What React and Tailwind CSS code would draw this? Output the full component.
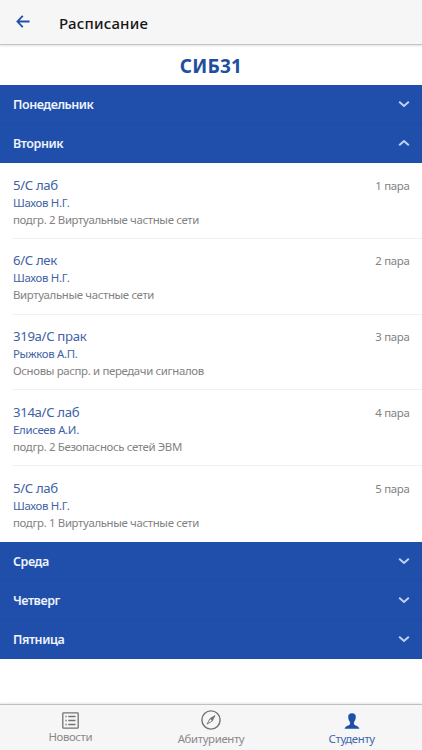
const lessons = [
  { room: "5/С лаб", teacher: "Шахов Н.Г.", subject: "подгр. 2 Виртуальные частные сети", pair: "1 пара" },
  { room: "6/С лек", teacher: "Шахов Н.Г.", subject: "Виртуальные частные сети", pair: "2 пара" },
  { room: "319а/С прак", teacher: "Рыжков А.П.", subject: "Основы распр. и передачи сигналов", pair: "3 пара" },
  { room: "314а/С лаб", teacher: "Елисеев А.И.", subject: "подгр. 2 Безопаснось сетей ЭВМ", pair: "4 пара" },
  { room: "5/С лаб", teacher: "Шахов Н.Г.", subject: "подгр. 1 Виртуальные частные сети", pair: "5 пара" },
];

const days = [
  { name: "Понедельник" },
  { name: "Вторник", open: true, lessons },
  { name: "Среда" },
  { name: "Четверг" },
  { name: "Пятница" },
];

function Chevron({ up }) {
  return (
    <svg
      className={up ? "mb-px rotate-180" : "mb-px"}
      width="12"
      height="8"
      viewBox="0 0 12 8"
      fill="none"
      stroke="#c3d1ec"
      strokeWidth="2"
    >
      <path d="M1.2 1.7 6 6 10.8 1.7" />
    </svg>
  );
}

function NewsIcon() {
  return (
    <svg width="17" height="17" viewBox="0 0 17 17" fill="none" stroke="#737373" strokeWidth="1.3">
      <rect x="0.8" y="0.8" width="15.4" height="15.4" rx="0.8" />
      <path d="M6.3 4.5H13.5M6.3 8.5H13.5M6.3 12.5H13.5M3.4 4.5H4.7M3.4 8.5H4.7M3.4 12.5H4.7" />
    </svg>
  );
}

function CompassIcon() {
  return (
    <svg width="20" height="20" viewBox="0 0 20 20" fill="none" stroke="#737373" strokeWidth="1.4">
      <circle cx="10" cy="10" r="9.1" />
      <path d="M14 5.6 8.9 8.7 6.1 14.1 11.2 11Z" strokeWidth="0.9" />
      <path d="M14 5.6 8.9 8.7 11.2 11Z" fill="#737373" stroke="none" />
    </svg>
  );
}

function StudentIcon() {
  return (
    <svg width="16" height="16" viewBox="0 0 16 16" fill="#1f4fa9">
      <path d="M8 0.2C5.5 0.2 4 1.7 4.2 4.1C4.3 6.2 4.9 7.9 6 9V11C5.9 12.7 1.2 12.6 0.6 15.8H15.4C14.8 12.6 10.1 12.7 10 11V9C11.1 7.9 11.7 6.2 11.8 4.1C12 1.7 10.5 0.2 8 0.2Z" />
    </svg>
  );
}

function Lesson({ item, last }) {
  return (
    <li className="pl-[13px]">
      <div
        className={
          last
            ? "flex h-[76px] justify-between pt-[12.5px] pr-[12.5px]"
            : "flex h-[75.75px] justify-between border-b border-[#f0f0f0] pt-[12.5px] pr-[12.5px]"
        }
      >
        <div className="whitespace-nowrap">
          <div className="text-[13.2px] leading-[18px] tracking-[-0.34px] text-[#4163a5]">{item.room}</div>
          <div className="text-[11.4px] leading-[17px] tracking-[-0.3px] text-[#4163a5]">{item.teacher}</div>
          <div className="text-[11.4px] leading-[17px] tracking-[-0.34px] text-[#828282]">{item.subject}</div>
        </div>
        <div className="text-[11.4px] leading-[19px] tracking-[-0.3px] text-[#828282]">{item.pair}</div>
      </div>
    </li>
  );
}

export default function App() {
  return (
    <div className="flex h-[750px] w-[422px] flex-col overflow-hidden bg-white font-['Noto_Sans','Open_Sans',sans-serif]">
      {/* Header */}
      <header className="flex h-[45px] shrink-0 items-center border-b border-[#c4c4c4] bg-[#f6f6f6] pl-[16px] shadow-[0_1px_2px_rgba(0,0,0,0.12)]">
        <svg width="14" height="13" viewBox="0 0 14 13" fill="none" stroke="#1f4fa9" strokeWidth="1.8" className="mb-px">
          <path d="M6.8 0.8 1.4 6.5 6.8 12.2M1.4 6.5H13.6" />
        </svg>
        <h1 className="mt-px ml-[29px] text-[15px] leading-5 font-medium tracking-[0.2px] text-[#161616]">Расписание</h1>
      </header>

      <h2 className="h-10 shrink-0 text-center text-[19px] leading-[43px] font-bold tracking-[0.2px] text-[#1f4fa0]">СИБ31</h2>

      {/* Days */}
      <main className="flex-1">
        {days.map((day) => (
          <section key={day.name}>
            <div className="flex h-[39px] items-center justify-between border-b border-[#1d4ca4] bg-[#1f4fab] pr-[12px] pl-[13px]">
              <span className="mt-[2px] text-[12.5px] font-semibold tracking-[-0.44px] text-[#eef3fc]">{day.name}</span>
              <Chevron up={day.open} />
            </div>
            {day.open && (
              <ul>
                {day.lessons.map((item, i) => (
                  <Lesson key={item.pair} item={item} last={i === day.lessons.length - 1} />
                ))}
              </ul>
            )}
          </section>
        ))}
      </main>

      {/* Tabs */}
      <nav className="grid h-[46px] shrink-0 grid-cols-3 border-t border-[#c0c0c0] bg-[#f6f6f6] text-[11.4px] leading-[15px] tracking-[-0.36px] text-[#8a8a8a] shadow-[0_-1px_2px_rgba(0,0,0,0.1)]">
        <div className="flex flex-col items-center pt-[7px]">
          <NewsIcon />
          <span>Новости</span>
        </div>
        <div className="flex flex-col items-center pt-[5px]">
          <CompassIcon />
          <span className="mt-px">Абитуриенту</span>
        </div>
        <div className="flex flex-col items-center pt-[8px] text-[#3f66b0]">
          <StudentIcon />
          <span className="mt-[2px]">Студенту</span>
        </div>
      </nav>
    </div>
  );
}
